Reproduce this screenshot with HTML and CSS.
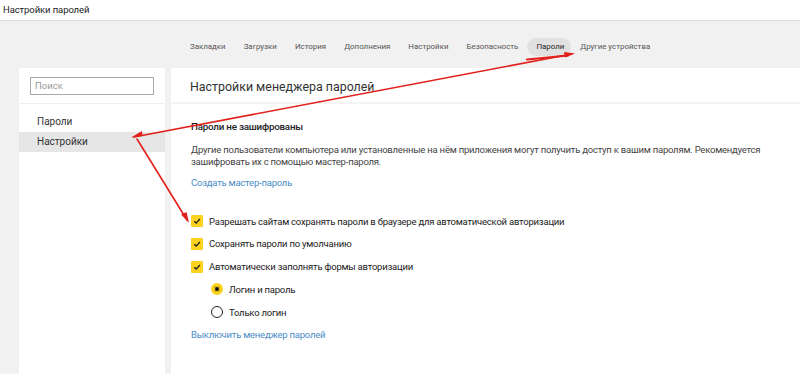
FILE: index.html
```html
<!DOCTYPE html>
<html lang="ru">
<head>
<meta charset="utf-8">
<title>Настройки паролей</title>
<link rel="stylesheet" href="styles.css">
</head>
<body>
<div class="titlebar">Настройки паролей</div>
<div class="app">
  <nav class="tabs">
    <span class="tab">Закладки</span>
    <span class="tab">Загрузки</span>
    <span class="tab">История</span>
    <span class="tab">Дополнения</span>
    <span class="tab">Настройки</span>
    <span class="tab">Безопасность</span>
    <span class="tab active">Пароли</span>
    <span class="tab">Другие устройства</span>
  </nav>
  <div class="columns">
    <aside class="sidebar">
      <div class="search-wrap"><div class="search">Поиск</div></div>
      <ul class="menu">
        <li class="item">Пароли</li>
        <li class="item selected">Настройки</li>
      </ul>
    </aside>
    <main class="main">
      <div class="main-head">Настройки менеджера паролей</div>
      <div class="main-body">
        <div class="warn-title">Пароли не зашифрованы</div>
        <p class="warn-text">Другие пользователи компьютера или установленные на нём приложения могут получить доступ к вашим паролям. Рекомендуется зашифровать их с помощью мастер-пароля.</p>
        <div class="link link-create">Создать мастер-пароль</div>
        <div class="options">
          <div class="check"><span class="box"><svg viewBox="0 0 12 12" width="12" height="12"><path d="M3.2 6.2 L5.2 8.1 L8.9 4" fill="none" stroke="#222" stroke-width="1.4"/></svg></span>Разрешать сайтам сохранять пароли в браузере для автоматической авторизации</div>
          <div class="check"><span class="box"><svg viewBox="0 0 12 12" width="12" height="12"><path d="M3.2 6.2 L5.2 8.1 L8.9 4" fill="none" stroke="#222" stroke-width="1.4"/></svg></span>Сохранять пароли по умолчанию</div>
          <div class="check"><span class="box"><svg viewBox="0 0 12 12" width="12" height="12"><path d="M3.2 6.2 L5.2 8.1 L8.9 4" fill="none" stroke="#222" stroke-width="1.4"/></svg></span>Автоматически заполнять формы авторизации</div>
          <div class="radio"><span class="dot on"></span>Логин и пароль</div>
          <div class="radio"><span class="dot"></span>Только логин</div>
        </div>
        <div class="link link-off">Выключить менеджер паролей</div>
      </div>
    </main>
  </div>
</div>
<svg class="arrows" width="800" height="374" viewBox="0 0 800 374">
  <g stroke="#e3201b" stroke-width="1.6" fill="none" stroke-linecap="round">
    <line x1="134" y1="137" x2="572" y2="54"/>
    <line x1="527" y1="59.5" x2="568" y2="55.5" stroke-width="2.2"/>
    <line x1="137" y1="139" x2="187" y2="220"/>
  </g>
  <g fill="#e3201b">
    <polygon points="131,137.5 142,131 142.5,136"/>
    <polygon points="575,53.5 564,52 565,57.5"/>
    <polygon points="189,223 181,214.5 186.5,212"/>
  </g>
</svg>
</body>
</html>
```
FILE: styles.css
```css
* { box-sizing: border-box; }
html, body { margin: 0; padding: 0; }
body {
  width: 800px;
  height: 374px;
  overflow: hidden;
  background: #f2f1f1;
  font-family: Roboto, "Open Sans", sans-serif;
  font-size: 10px;
  color: #333;
  position: relative;
}
.titlebar {
  height: 21px;
  background: #fff;
  border-bottom: 1px solid #dedede;
  padding: 2px 0 0 3px;
  font-size: 9.5px;
  letter-spacing: -0.1px;
  color: #222;
  line-height: 15px;
}
.app { display: flex; flex-direction: column; height: 353px; }
.tabs {
  display: flex;
  align-items: center;
  height: 47px;
  padding: 5px 0 0 181px;
  font-size: 7.9px;
  color: #555;
}
.tab { padding: 0 9px; line-height: 18px; border-radius: 9px; }
.tab.active { background: #e2e1e1; color: #222; padding: 0 7px 0 9px; }
.columns { display: flex; flex: 1; padding-left: 19px; gap: 6px; }
.sidebar { width: 146px; background: #fff; }
.search-wrap { padding: 9px 11px 8px 11px; border-bottom: 1px solid #efefef; }
.search {
  height: 18px;
  border: 1px solid #a9a9a9;
  color: #9a9a9a;
  padding-left: 4px;
  line-height: 15px;
  font-size: 9.5px;
}
.menu { list-style: none; margin: 0; padding: 8px 0 0 0; }
.item { height: 20px; line-height: 20px; padding-left: 18px; color: #333; font-size: 10px; }
.item.selected { background: #e6e6e6; }
.main { flex: 1; background: #fff; display: flex; flex-direction: column; }
.main-head {
  height: 36px;
  padding: 10px 0 0 19px;
  font-size: 12.4px;
  color: #333;
  line-height: 18px;
  border-bottom: 2px solid #f4f4f4;
}
.main-body { padding: 16px 0 0 20px; font-size: 9.5px; letter-spacing: -0.22px; }
.warn-title { font-weight: 500; color: #222; line-height: 14px; font-size: 9.8px; }
.warn-text { margin: 10px 0 0 0; line-height: 12px; color: #444; width: 590px; }
.link { color: #4a8cc6; line-height: 14px; }
.link-create { margin-top: 8px; }
.options { margin-top: 24px; display: flex; flex-direction: column; gap: 8.8px; }
.check, .radio { display: flex; align-items: center; height: 14px; color: #222; }
.box {
  width: 12px; height: 12px; background: #fcd21c; border-radius: 1px;
  margin-right: 6px; display: flex;
}
.radio { padding-left: 20px; }
.dot {
  width: 12px; height: 12px; border-radius: 50%;
  border: 1.5px solid #222; margin-right: 6px; background: #fff;
}
.dot.on { border: 3px solid #fcd21c; background: #111; box-shadow: inset 0 0 0 1px #fcd21c; }
.link-off { margin-top: 9px; }
.arrows { position: absolute; left: 0; top: 0; pointer-events: none; }
```
